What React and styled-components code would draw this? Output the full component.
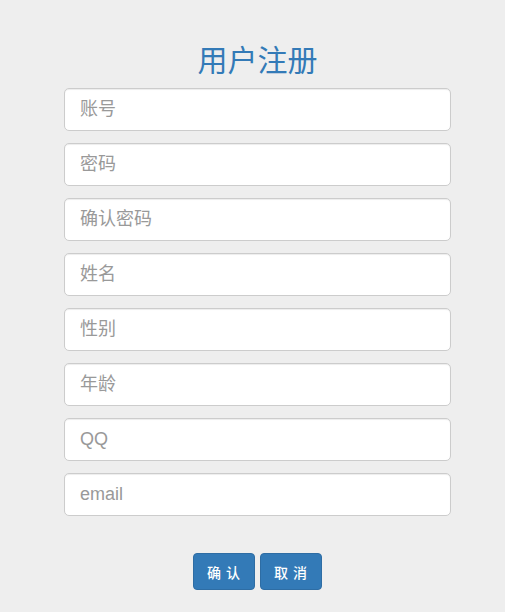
import React from 'react';
import styled, { createGlobalStyle } from 'styled-components';

const GlobalStyle = createGlobalStyle`
  html, body {
    margin: 0;
    padding: 0;
    background: #eeeeee;
    font-family: "Helvetica Neue", "Liberation Sans", Arial, "Noto Sans CJK SC", sans-serif;
  }
`;

const Page = styled.div`
  width: 505px;
  min-height: 612px;
  background: #eeeeee;
`;

const Form = styled.form`
  width: 387px;
  margin-left: 64px;
  padding-top: 42px;
`;

const Title = styled.h2`
  margin: 0 0 13px;
  height: 33px;
  line-height: 33px;
  font-size: 30px;
  font-weight: 400;
  color: #337ab7;
  text-align: center;
  font-family: "Noto Sans CJK SC", sans-serif;
`;

const Input = styled.input`
  display: block;
  box-sizing: border-box;
  width: 100%;
  height: 43px;
  margin: 0 0 12px;
  padding: 8px 15px;
  font-size: 18px;
  font-family: "Liberation Sans", "Noto Sans CJK SC", sans-serif;
  color: #555555;
  background: #ffffff;
  border: 1px solid #cccccc;
  border-radius: 5px;
  box-shadow: inset 0 1px 1px rgba(0, 0, 0, 0.075);
  outline: none;

  &::placeholder {
    color: #999999;
  }
`;

const Actions = styled.div`
  display: flex;
  justify-content: center;
  gap: 5px;
  margin-top: 37px;
`;

const Button = styled.button`
  width: 62px;
  height: 37px;
  padding: 0;
  font-size: 14px;
  font-weight: 500;
  font-family: "Noto Sans CJK SC", sans-serif;
  letter-spacing: 1px;
  color: #ffffff;
  background: #337ab7;
  border: 1px solid #2e6da4;
  border-radius: 4px;
  cursor: pointer;
`;

const fields = ['账号', '密码', '确认密码', '姓名', '性别', '年龄', 'QQ', 'email'];

export default function App() {
  return (
    <Page>
      <GlobalStyle />
      <Form onSubmit={(e) => e.preventDefault()}>
        <Title>用户注册</Title>
        {fields.map((f) => (
          <Input
            key={f}
            type={f === '密码' || f === '确认密码' ? 'password' : 'text'}
            placeholder={f}
          />
        ))}
        <Actions>
          <Button type="submit">确 认</Button>
          <Button type="button">取 消</Button>
        </Actions>
      </Form>
    </Page>
  );
}
